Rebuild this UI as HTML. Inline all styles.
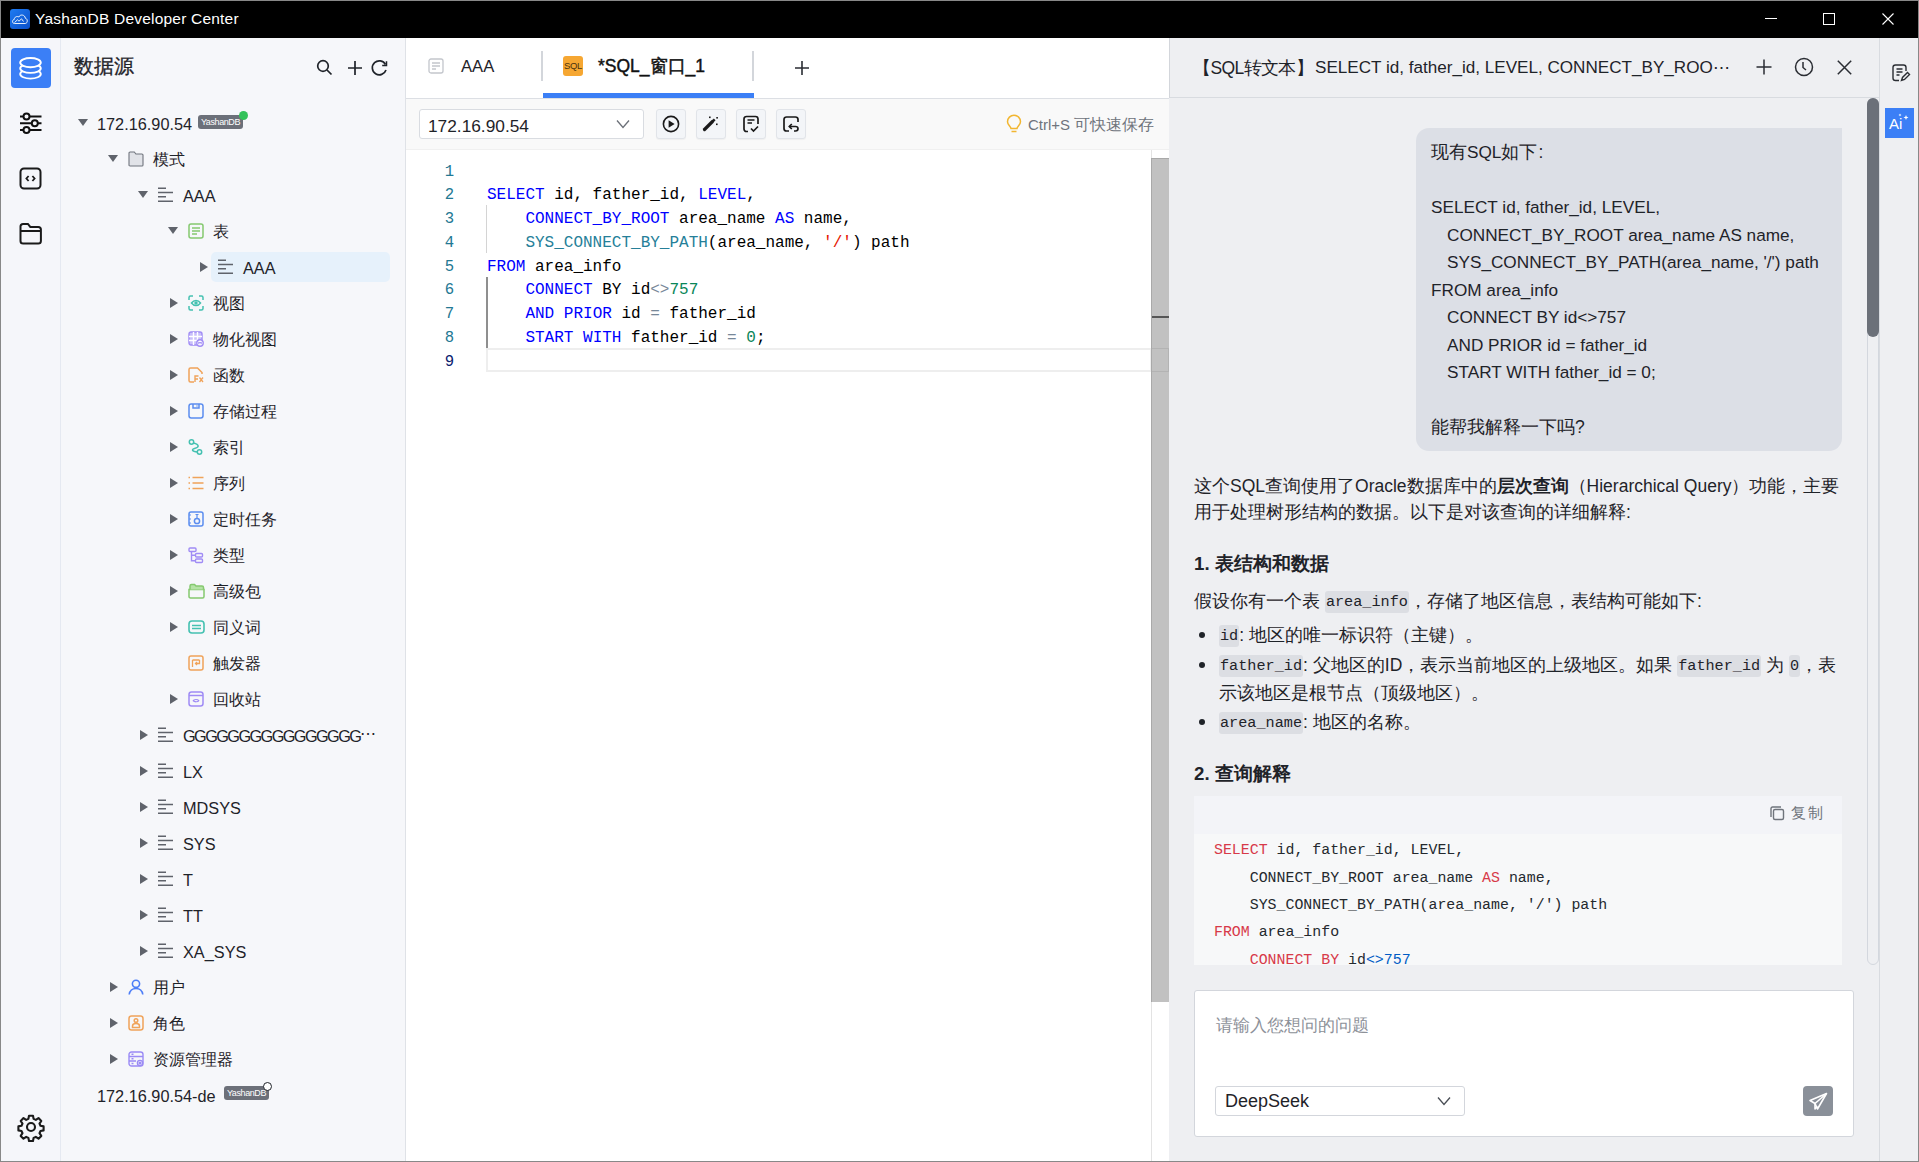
<!DOCTYPE html>
<html><head><meta charset="utf-8">
<style>
*{box-sizing:border-box;margin:0;padding:0}
html,body{width:1919px;height:1162px;overflow:hidden;background:#888}
body{font-family:"Liberation Sans",sans-serif;color:#1f2329;position:relative}
.a{position:absolute}
svg{position:absolute;overflow:visible}
#title{left:1px;top:1px;width:1917px;height:37px;background:#000}
#rail{left:1px;top:38px;width:59px;height:1123px;background:#f5f6fa}
#railb{left:60px;top:38px;width:1px;height:1123px;background:#e5e9f1}
#side{left:61px;top:38px;width:344px;height:1123px;background:#f6f7fa}
#sideb{left:405px;top:38px;width:1px;height:1123px;background:#dfe2e7}
#ed{left:406px;top:38px;width:763px;height:1123px;background:#fff}
#aib{left:1169px;top:38px;width:1px;height:60px;background:#d3d6db}
#ai{left:1169px;top:38px;width:710px;height:1123px;background:#eeeff2}
#rrb{left:1879px;top:38px;width:1px;height:1123px;background:#d8dbe0}
#rr{left:1880px;top:38px;width:38px;height:1123px;background:#eeeff2}
.row{position:absolute;height:36px;line-height:36px;font-size:16.4px;white-space:nowrap;color:#1f2329}
.lat{font-size:16.3px;margin-top:0.5px}
.tri-d{position:absolute;width:0;height:0;border-left:5.5px solid transparent;border-right:5.5px solid transparent;border-top:7.5px solid #5f636b}
.tri-r{position:absolute;width:0;height:0;border-top:5.5px solid transparent;border-bottom:5.5px solid transparent;border-left:8px solid #5f636b}
.code{font-family:"Liberation Mono",monospace}
.bt{height:26px;line-height:26px;font-size:17.5px;white-space:pre;color:#1f2329}
.L{}
.ht{height:28px;line-height:28px;font-size:18.7px;font-weight:bold;white-space:nowrap;color:#1f2329}
.ic{font-family:"Liberation Mono",monospace;font-size:15.2px;background:#dcdee3;border-radius:3px;padding:2px 1px;position:relative;top:-1.5px}
</style></head><body>
<div id="title" class="a"></div>
<div id="rail" class="a"></div>
<div id="railb" class="a"></div>
<div id="side" class="a"></div>
<div id="sideb" class="a"></div>
<div id="ed" class="a"></div>
<div id="ai" class="a"></div>
<div id="aib" class="a"></div>
<div id="rrb" class="a"></div>
<div id="rr" class="a"></div>
<div class="a" style="left:10px;top:9px;width:20px;height:20px;border-radius:3px;background:linear-gradient(135deg,#1e7cf2,#0a4fc9)"></div>
<svg style="left:10px;top:9px" width="20" height="20" viewBox="0 0 20 20"><path d="M4.5 14.5 C2 14.5 1.8 10.8 4.2 10.5 C4.3 8 7 6.8 8.8 8 C10 5 15 5.5 15.3 9.2 C17.8 9.5 18 14.3 15.3 14.5 Z" fill="none" stroke="#fff" stroke-width="0.9"/><path d="M4.5 13.5 L7.5 10.8 L9 12.2 L11.5 9.8 L13.5 12.5" fill="none" stroke="#fff" stroke-width="0.9"/></svg>
<div class="a" id="ttxt" style="left:35px;top:10px;height:18px;line-height:18px;font-size:15.5px;color:#fff;white-space:nowrap;letter-spacing:0.2px">YashanDB Developer Center</div>
<div class="a" style="left:1765px;top:18px;width:12px;height:1px;background:#fff"></div>
<div class="a" style="left:1823px;top:13px;width:12px;height:12px;border:1px solid #fff"></div>
<svg style="left:1882px;top:13px" width="12" height="12" viewBox="0 0 12 12"><path d="M0.5 0.5L11.5 11.5M11.5 0.5L0.5 11.5" stroke="#fff" stroke-width="1.1"/></svg>

<div class="a" style="left:11px;top:48px;width:40px;height:40px;border-radius:4px;background:#3b7ff6"></div>
<svg style="left:19px;top:56px" width="24" height="25" viewBox="0 0 24 25"><g fill="#3b7ff6" stroke="#fff" stroke-width="1.9"><ellipse cx="11.5" cy="18" rx="10.3" ry="4.6"/><ellipse cx="11.5" cy="12.3" rx="10.3" ry="4.6"/><ellipse cx="11.5" cy="6.6" rx="10.3" ry="4.6"/></g></svg>
<svg style="left:19px;top:112px" width="24" height="22" viewBox="0 0 24 22"><g fill="none" stroke="#111" stroke-width="2"><path d="M1 4.5h3.5M10.5 4.5h12M1 11.3h11.8M18.8 11.3h3.7M1 18h3.5M10.5 18h12"/><circle cx="7.5" cy="4.5" r="3"/><circle cx="15.8" cy="11.3" r="3"/><circle cx="7.5" cy="18" r="3"/></g></svg>
<svg style="left:19px;top:167px" width="23" height="23" viewBox="0 0 23 23"><g fill="none" stroke="#1a1a1a" stroke-width="2"><rect x="1.5" y="1.5" width="20" height="20" rx="3.5"/><path d="M9.6 9l-2.2 2.5 2.2 2.5M13.4 9l2.2 2.5-2.2 2.5" stroke-width="1.8"/></g></svg>
<svg style="left:19px;top:222px" width="23" height="23" viewBox="0 0 23 23"><g fill="none" stroke="#1a1a1a" stroke-width="2"><path d="M1.5 4.5c0-1.6 1-2.6 2.6-2.6h4.8l2.4 3h8c1.6 0 2.6 1 2.6 2.6v11.5c0 1.6-1 2.6-2.6 2.6H4.1c-1.6 0-2.6-1-2.6-2.6z"/><path d="M1.5 9h20"/></g></svg>
<svg style="left:18px;top:1114px" width="26" height="26" viewBox="0 0 26 26"><g fill="none" stroke="#1a1a1a" stroke-width="2.1" stroke-linejoin="round"><path d="M11 1.8h4l.6 3.1 2.2 1 2.7-1.8 2.8 2.8-1.8 2.7 1 2.2 3.1.6v4l-3.1.6-1 2.2 1.8 2.7-2.8 2.8-2.7-1.8-2.2 1-.6 3.1h-4l-.6-3.1-2.2-1-2.7 1.8-2.8-2.8 1.8-2.7-1-2.2-3.1-.6v-4l3.1-.6 1-2.2-1.8-2.7 2.8-2.8 2.7 1.8 2.2-1z"/><circle cx="13" cy="13" r="4"/></g></svg>

<div class="a" style="left:74px;top:53px;height:26px;line-height:26px;font-size:20px;color:#1f2329;-webkit-text-stroke:0.3px #1f2329">数据源</div>
<svg style="left:316px;top:59px" width="17" height="17" viewBox="0 0 17 17"><g fill="none" stroke="#1f2329" stroke-width="1.7"><circle cx="7" cy="7" r="5.3"/><path d="M11 11l4.5 4.5"/></g></svg>
<svg style="left:347px;top:60px" width="16" height="16" viewBox="0 0 16 16"><path d="M8 1v14M1 8h14" stroke="#1f2329" stroke-width="1.7"/></svg>
<svg style="left:371px;top:60px" width="17" height="16" viewBox="0 0 17 16"><g fill="none" stroke="#1f2329" stroke-width="1.7"><path d="M14.5 4.5A7 7 0 1 0 15 10"/><path d="M15.5 1.2v4.3h-4.3" stroke-width="1.5"/></g></svg>
<!--TREE--><div class="tri-d" style="left:78px;top:119px"></div>
<div class="row lat" style="left:97px;top:105px">172.16.90.54</div>
<div class="tri-d" style="left:108px;top:155px"></div>
<svg style="left:128px;top:151px" width="16" height="16" viewBox="0 0 16 16"><path d="M1 2.2c0-.7.4-1.2 1.1-1.2h4.2l1.6 2h6c.7 0 1.1.4 1.1 1.1v9.8c0 .7-.4 1.1-1.1 1.1H2.1c-.7 0-1.1-.4-1.1-1.1z" fill="#e1e3e8" stroke="#6f747c" stroke-width="1.1"/></svg>
<div class="row" style="left:153px;top:141px">模式</div>
<div class="tri-d" style="left:138px;top:191px"></div>
<svg style="left:158px;top:187px" width="16" height="16" viewBox="0 0 16 16"><g stroke="#5f636b" stroke-width="1.6"><path d="M0 1.2h8M0 5.5h15M0 9.8h8M0 14.2h15"/></g></svg>
<div class="row lat" style="left:183px;top:177px">AAA</div>
<div class="tri-d" style="left:168px;top:227px"></div>
<svg style="left:188px;top:223px" width="16" height="16" viewBox="0 0 16 16"><g fill="none" stroke="#85c96f" stroke-width="1.5"><rect x="1" y="1" width="14" height="14" rx="2"/><path d="M4 5h8M4 8h8M4 11h5"/></g></svg>
<div class="row" style="left:213px;top:213px">表</div>
<div class="a" style="left:211px;top:252px;width:179px;height:30px;border-radius:5px;background:#e6f1fb"></div>
<div class="tri-r" style="left:200px;top:262px"></div>
<svg style="left:218px;top:259px" width="16" height="16" viewBox="0 0 16 16"><g stroke="#5f636b" stroke-width="1.6"><path d="M0 1.2h8M0 5.5h15M0 9.8h8M0 14.2h15"/></g></svg>
<div class="row lat" style="left:243px;top:249px">AAA</div>
<div class="tri-r" style="left:170px;top:298px"></div>
<svg style="left:188px;top:295px" width="16" height="16" viewBox="0 0 16 16"><g fill="none" stroke="#45c1b1" stroke-width="1.5"><path d="M1 5V2.5C1 1.7 1.7 1 2.5 1H5M11 1h2.5c.8 0 1.5.7 1.5 1.5V5M15 11v2.5c0 .8-.7 1.5-1.5 1.5H11M5 15H2.5C1.7 15 1 14.3 1 13.5V11"/><path d="M3.5 8c2.5-3.3 6.5-3.3 9 0-2.5 3.3-6.5 3.3-9 0z"/><circle cx="8" cy="8" r="1" fill="#45c1b1"/></g></svg>
<div class="row" style="left:213px;top:285px">视图</div>
<div class="tri-r" style="left:170px;top:334px"></div>
<svg style="left:188px;top:331px" width="16" height="16" viewBox="0 0 16 16"><g fill="none" stroke="#a08cf5" stroke-width="1.4"><rect x="1" y="1" width="13" height="13" rx="2" fill="#c9bffb"/><path d="M1 5.5h13M1 9.5h13M5.5 1v13M9.5 1v13" stroke="#fff"/><circle cx="12" cy="12" r="3.2" fill="#fff"/><path d="M10.8 13.3v-2.4l1.2 1.3 1.2-1.3v2.4" stroke-width="1"/></g></svg>
<div class="row" style="left:213px;top:321px">物化视图</div>
<div class="tri-r" style="left:170px;top:370px"></div>
<svg style="left:188px;top:367px" width="16" height="16" viewBox="0 0 16 16"><g fill="none" stroke="#f0a35a" stroke-width="1.5"><path d="M6 15H2.5C1.7 15 1 14.3 1 13.5v-11C1 1.7 1.7 1 2.5 1h7l4.5 4.5V7"/><path d="M7 15V9h3.5M7 12h3" stroke-width="1.4"/><path d="M11.5 10.5l3.5 4.5M15 10.5l-3.5 4.5" stroke-width="1.3"/></g></svg>
<div class="row" style="left:213px;top:357px">函数</div>
<div class="tri-r" style="left:170px;top:406px"></div>
<svg style="left:188px;top:403px" width="16" height="16" viewBox="0 0 16 16"><g fill="none" stroke="#5b8def" stroke-width="1.5"><rect x="1" y="1" width="14" height="14" rx="2.2"/><path d="M5 1v4h6V1M9 2.5v1"/></g></svg>
<div class="row" style="left:213px;top:393px">存储过程</div>
<div class="tri-r" style="left:170px;top:442px"></div>
<svg style="left:188px;top:439px" width="16" height="16" viewBox="0 0 16 16"><g fill="none" stroke="#45c1b1" stroke-width="1.5"><circle cx="3.5" cy="3" r="2.2"/><circle cx="11.5" cy="13" r="2.2"/><path d="M5.5 4c6 1.5 6 4.5 1 5.5-3 .8-3 3 3 3.5"/></g></svg>
<div class="row" style="left:213px;top:429px">索引</div>
<div class="tri-r" style="left:170px;top:478px"></div>
<svg style="left:188px;top:475px" width="16" height="16" viewBox="0 0 16 16"><g stroke="#f0a35a" stroke-width="1.5"><path d="M4.5 2.5h11M4.5 8h11M4.5 13.5h11M0.5 2.5h1.5M0.5 8h1.5M0.5 13.5h1.5"/></g></svg>
<div class="row" style="left:213px;top:465px">序列</div>
<div class="tri-r" style="left:170px;top:514px"></div>
<svg style="left:188px;top:511px" width="16" height="16" viewBox="0 0 16 16"><g fill="none" stroke="#5b8def" stroke-width="1.5"><rect x="1" y="1" width="14" height="14" rx="2"/><path d="M1 4h2M1 8h2M1 12h2" stroke-width="1.2"/><circle cx="9" cy="10" r="2.6"/><path d="M7.5 3.5h3M9 4v3.2" stroke-width="1.2"/></g></svg>
<div class="row" style="left:213px;top:501px">定时任务</div>
<div class="tri-r" style="left:170px;top:550px"></div>
<svg style="left:188px;top:547px" width="16" height="16" viewBox="0 0 16 16"><g fill="none" stroke="#a08cf5" stroke-width="1.4"><rect x="1" y="1" width="7" height="3.5" rx="1"/><rect x="7.5" y="6.5" width="7" height="3.5" rx="1"/><rect x="7.5" y="12" width="7" height="3.5" rx="1"/><path d="M3.5 4.5v9.2h4M3.5 8.2h4"/></g></svg>
<div class="row" style="left:213px;top:537px">类型</div>
<div class="tri-r" style="left:170px;top:586px"></div>
<svg style="left:188px;top:583px" width="16" height="16" viewBox="0 0 16 16"><g fill="none" stroke="#85c96f" stroke-width="1.5"><path d="M1 6.5h15v7c0 .9-.6 1.5-1.5 1.5h-12C1.6 15 1 14.4 1 13.5z"/><path d="M2 6.5V3c0-.9.6-1.5 1.5-1.5h3l1.5 1.5h6c.9 0 1.5.6 1.5 1.5v2" fill="#b5e3a6"/></g></svg>
<div class="row" style="left:213px;top:573px">高级包</div>
<div class="tri-r" style="left:170px;top:622px"></div>
<svg style="left:188px;top:619px" width="16" height="16" viewBox="0 0 16 16"><g fill="none" stroke="#45c1b1" stroke-width="1.6"><rect x="1" y="2" width="15" height="12" rx="3"/><path d="M4 6.5h9M4 9.5h9"/></g></svg>
<div class="row" style="left:213px;top:609px">同义词</div>
<svg style="left:188px;top:655px" width="16" height="16" viewBox="0 0 16 16"><g fill="none" stroke="#f0a35a" stroke-width="1.5"><rect x="1" y="1" width="14" height="14" rx="2"/><path d="M4.5 5h7M4.5 5v7M11.5 5v3.5H7.5M9 7l-1.5 1.5L9 10" stroke-width="1.3"/></g></svg>
<div class="row" style="left:213px;top:645px">触发器</div>
<div class="tri-r" style="left:170px;top:694px"></div>
<svg style="left:188px;top:691px" width="16" height="16" viewBox="0 0 16 16"><g fill="none" stroke="#a08cf5" stroke-width="1.5"><rect x="1" y="1" width="14" height="14" rx="2.5"/><path d="M1 4.5h14"/><path d="M5 9.8c1-1.6 4.5-1.8 6 0M11 9.5c-1 1.6-4.5 1.8-6 0" stroke-width="1.2"/></g></svg>
<div class="row" style="left:213px;top:681px">回收站</div>
<div class="tri-r" style="left:140px;top:730px"></div>
<svg style="left:158px;top:727px" width="16" height="16" viewBox="0 0 16 16"><g stroke="#5f636b" stroke-width="1.6"><path d="M0 1.2h8M0 5.5h15M0 9.8h8M0 14.2h15"/></g></svg>
<div class="row lat" style="left:183px;top:717px;letter-spacing:-1.58px">GGGGGGGGGGGGGGGG</div>
<div class="row" style="left:360px;top:716px;font-size:16px">⋯</div>
<div class="tri-r" style="left:140px;top:766px"></div>
<svg style="left:158px;top:763px" width="16" height="16" viewBox="0 0 16 16"><g stroke="#5f636b" stroke-width="1.6"><path d="M0 1.2h8M0 5.5h15M0 9.8h8M0 14.2h15"/></g></svg>
<div class="row lat" style="left:183px;top:753px">LX</div>
<div class="tri-r" style="left:140px;top:802px"></div>
<svg style="left:158px;top:799px" width="16" height="16" viewBox="0 0 16 16"><g stroke="#5f636b" stroke-width="1.6"><path d="M0 1.2h8M0 5.5h15M0 9.8h8M0 14.2h15"/></g></svg>
<div class="row lat" style="left:183px;top:789px">MDSYS</div>
<div class="tri-r" style="left:140px;top:838px"></div>
<svg style="left:158px;top:835px" width="16" height="16" viewBox="0 0 16 16"><g stroke="#5f636b" stroke-width="1.6"><path d="M0 1.2h8M0 5.5h15M0 9.8h8M0 14.2h15"/></g></svg>
<div class="row lat" style="left:183px;top:825px">SYS</div>
<div class="tri-r" style="left:140px;top:874px"></div>
<svg style="left:158px;top:871px" width="16" height="16" viewBox="0 0 16 16"><g stroke="#5f636b" stroke-width="1.6"><path d="M0 1.2h8M0 5.5h15M0 9.8h8M0 14.2h15"/></g></svg>
<div class="row lat" style="left:183px;top:861px">T</div>
<div class="tri-r" style="left:140px;top:910px"></div>
<svg style="left:158px;top:907px" width="16" height="16" viewBox="0 0 16 16"><g stroke="#5f636b" stroke-width="1.6"><path d="M0 1.2h8M0 5.5h15M0 9.8h8M0 14.2h15"/></g></svg>
<div class="row lat" style="left:183px;top:897px">TT</div>
<div class="tri-r" style="left:140px;top:946px"></div>
<svg style="left:158px;top:943px" width="16" height="16" viewBox="0 0 16 16"><g stroke="#5f636b" stroke-width="1.6"><path d="M0 1.2h8M0 5.5h15M0 9.8h8M0 14.2h15"/></g></svg>
<div class="row lat" style="left:183px;top:933px">XA_SYS</div>
<div class="tri-r" style="left:110px;top:982px"></div>
<svg style="left:128px;top:979px" width="16" height="16" viewBox="0 0 16 16"><g fill="none" stroke="#4d7ef7" stroke-width="1.6"><circle cx="8" cy="4.8" r="3.6"/><path d="M1.2 15.5c.6-3.8 3.2-6 6.8-6s6.2 2.2 6.8 6"/></g></svg>
<div class="row" style="left:153px;top:969px">用户</div>
<div class="tri-r" style="left:110px;top:1018px"></div>
<svg style="left:128px;top:1015px" width="16" height="16" viewBox="0 0 16 16"><g fill="none" stroke="#f0a35a" stroke-width="1.5"><rect x="1" y="1" width="14" height="14" rx="2.5"/><circle cx="8" cy="5.5" r="1.8"/><path d="M4.5 12.5v-1.5c0-1.5 1.5-2.5 3.5-2.5s3.5 1 3.5 2.5v1.5zM4.5 12.5h7"/></g></svg>
<div class="row" style="left:153px;top:1005px">角色</div>
<div class="tri-r" style="left:110px;top:1054px"></div>
<svg style="left:128px;top:1051px" width="16" height="16" viewBox="0 0 16 16"><g fill="none" stroke="#9b8bf5" stroke-width="1.4"><rect x="1" y="1" width="14" height="14" rx="2.5"/><path d="M1 5.5h14M1 10h7M3.5 3.2h2M3.5 7.8h2M3.5 12.5h2"/><circle cx="12" cy="12" r="2.6" fill="#f6f7fa"/><circle cx="12" cy="12" r="0.8"/></g></svg>
<div class="row" style="left:153px;top:1041px">资源管理器</div>
<div class="row lat" style="left:97px;top:1077px">172.16.90.54-de</div>
<div class="a" style="left:198px;top:115px;width:45px;height:14px;border-radius:3px;background:#6c7079;color:#fff;font-size:9px;line-height:14px;text-align:center;letter-spacing:-0.4px">YashanDB</div>
<div class="a" style="left:239px;top:111px;width:9px;height:9px;border-radius:50%;background:#34c25a"></div>
<div class="a" style="left:224px;top:1086px;width:45px;height:14px;border-radius:3px;background:#6c7079;color:#fff;font-size:9px;line-height:14px;text-align:center;letter-spacing:-0.4px">YashanDB</div>
<div class="a" style="left:263px;top:1082px;width:9px;height:9px;border-radius:50%;background:#fff;border:1.5px solid #1f2329"></div><!--/TREE-->
<!--EDITOR--><div class="a" style="left:406px;top:98px;width:763px;height:1px;background:#dcdfe4"></div>
<svg style="left:428px;top:58px" width="16" height="16" viewBox="0 0 16 16"><g fill="none" stroke="#c3c6cc" stroke-width="1.3"><rect x="1" y="1" width="14" height="14" rx="2"/><path d="M4 5h8M4 8h8M4 11h4"/></g></svg>
<div class="a" style="left:461px;top:54.5px;height:24px;line-height:24px;font-size:16.6px;color:#1f2329">AAA</div>
<div class="a" style="left:541px;top:51px;width:2px;height:30px;background:#d3d6db"></div>
<div class="a" style="left:563px;top:56px;width:20px;height:20px;border-radius:3px;background:#f6a732;color:#4a3410;font-size:9.5px;line-height:20px;text-align:center;letter-spacing:-0.3px">SQL</div>
<div class="a" style="left:598px;top:54px;height:24px;line-height:24px;font-size:17.5px;color:#111;-webkit-text-stroke:0.45px #111">*SQL_窗口_1</div>
<div class="a" style="left:752px;top:51px;width:2px;height:30px;background:#d3d6db"></div>
<div class="a" style="left:543px;top:93px;width:211px;height:5px;background:#3b7ff6"></div>
<svg style="left:794px;top:60px" width="16" height="16" viewBox="0 0 16 16"><path d="M8 1v14M1 8h14" stroke="#2a2d33" stroke-width="1.6"/></svg>
<div class="a" style="left:406px;top:99px;width:763px;height:50px;background:#f9f9f9"></div>
<div class="a" style="left:406px;top:149px;width:763px;height:1px;background:#f0f0f0"></div>
<div class="a" style="left:419px;top:109px;width:225px;height:30px;background:#fff;border:1px solid #d9dce1;border-radius:3px"></div>
<div class="a lat" style="left:428px;top:113.5px;height:24px;line-height:24px;font-size:17.3px;color:#1f2329">172.16.90.54</div>
<svg style="left:616px;top:119px" width="14" height="10" viewBox="0 0 14 10"><path d="M1 1.5l6 7 6-7" fill="none" stroke="#6b7078" stroke-width="1.3"/></svg>
<div class="a" style="left:656px;top:109px;width:30px;height:30px;background:#f3f5f8;border:1px solid #e1e4e9;border-radius:3px;box-shadow:0 1px 1px rgba(0,0,0,0.04)"></div>
<div class="a" style="left:696px;top:109px;width:30px;height:30px;background:#f3f5f8;border:1px solid #e1e4e9;border-radius:3px;box-shadow:0 1px 1px rgba(0,0,0,0.04)"></div>
<div class="a" style="left:736px;top:109px;width:30px;height:30px;background:#f3f5f8;border:1px solid #e1e4e9;border-radius:3px;box-shadow:0 1px 1px rgba(0,0,0,0.04)"></div>
<div class="a" style="left:776px;top:109px;width:30px;height:30px;background:#f3f5f8;border:1px solid #e1e4e9;border-radius:3px;box-shadow:0 1px 1px rgba(0,0,0,0.04)"></div>
<svg style="left:656px;top:109px" width="30" height="30" viewBox="0 0 30 30"><circle cx="15" cy="15" r="7.6" fill="none" stroke="#1a1a1a" stroke-width="1.6"/><path d="M12.6 11.2v7.6l6-3.8z" fill="#1a1a1a"/></svg>
<svg style="left:696px;top:109px" width="30" height="30" viewBox="0 0 30 30"><path d="M8.5 20.5l8-8" stroke="#1a1a1a" stroke-width="3.2" stroke-linecap="round"/><path d="M17.2 11.8l1.5-1.5" stroke="#1a1a1a" stroke-width="2.4"/><g fill="#1a1a1a"><rect x="13" y="7.5" width="1.6" height="1.6"/><rect x="20.3" y="8" width="1.6" height="1.6"/><rect x="20" y="14.5" width="1.6" height="1.6"/></g></svg>
<svg style="left:736px;top:109px" width="30" height="30" viewBox="0 0 30 30"><g fill="none" stroke="#1a1a1a" stroke-width="1.7"><path d="M12 22.5h-1.5c-1.4 0-2.5-1.1-2.5-2.5V10c0-1.4 1.1-2.5 2.5-2.5h9c1.4 0 2.5 1.1 2.5 2.5v5"/><path d="M11.5 11h7M11.5 14h4.5"/><path d="M15 19.5l2.5 2.5 4.5-4.5"/></g></svg>
<svg style="left:776px;top:109px" width="30" height="30" viewBox="0 0 30 30"><g fill="none" stroke="#1a1a1a" stroke-width="1.7"><path d="M22 13v-2.5C22 9 21 8 19.5 8h-9C9 8 8 9 8 10.5v9c0 1.5 1 2.5 2.5 2.5H13"/><path d="M13.5 17.5h6c1.5 0 2.5 1 2.5 2.3 0 1.3-1 2.2-2.5 2.2h-1.5"/><path d="M15.8 15l-2.5 2.5 2.5 2.5"/></g></svg>
<svg style="left:1006px;top:116px" width="16" height="18" viewBox="0 0 16 18"><g fill="none" stroke="#f2b630" stroke-width="1.5"><path d="M5 12.5c0-2-3.5-3.5-3.5-6.8a6.5 6.5 0 0 1 13 0c0 3.3-3.5 4.8-3.5 6.8z"/><path d="M5.5 15.5h5"/></g></svg>
<div class="a" style="left:1028px;top:113px;height:24px;line-height:24px;font-size:15.6px;color:#6f747c;white-space:nowrap"><span style="font-size:15px">Ctrl+S</span> 可快速保存</div>
<div class="a" style="left:486px;top:348px;width:666px;height:24px;border:2px solid #eeeeee"></div>
<div class="a" style="left:486px;top:205px;width:1px;height:48px;background:#d4d4d4"></div>
<div class="a" style="left:486px;top:277px;width:1.5px;height:71px;background:#8f8f8f"></div>
<div class="a code" style="left:420px;top:160.50px;width:34px;height:23.75px;line-height:23.75px;font-size:15.6px;text-align:right;color:#237893">1</div>
<div class="a code" style="left:420px;top:184.25px;width:34px;height:23.75px;line-height:23.75px;font-size:15.6px;text-align:right;color:#237893">2</div>
<div class="a code" style="left:487px;top:184.25px;height:23.75px;line-height:23.75px;font-size:16px;white-space:pre;color:#000"><span style="color:#0000ff">SELECT</span> id, father_id, <span style="color:#0000ff">LEVEL</span>,</div>
<div class="a code" style="left:420px;top:208.00px;width:34px;height:23.75px;line-height:23.75px;font-size:15.6px;text-align:right;color:#237893">3</div>
<div class="a code" style="left:487px;top:208.00px;height:23.75px;line-height:23.75px;font-size:16px;white-space:pre;color:#000">    <span style="color:#0000ff">CONNECT_BY_ROOT</span> area_name <span style="color:#0000ff">AS</span> name,</div>
<div class="a code" style="left:420px;top:231.75px;width:34px;height:23.75px;line-height:23.75px;font-size:15.6px;text-align:right;color:#237893">4</div>
<div class="a code" style="left:487px;top:231.75px;height:23.75px;line-height:23.75px;font-size:16px;white-space:pre;color:#000">    <span style="color:#267f99">SYS_CONNECT_BY_PATH</span>(area_name, <span style="color:#e51400">'/'</span>) path</div>
<div class="a code" style="left:420px;top:255.50px;width:34px;height:23.75px;line-height:23.75px;font-size:15.6px;text-align:right;color:#237893">5</div>
<div class="a code" style="left:487px;top:255.50px;height:23.75px;line-height:23.75px;font-size:16px;white-space:pre;color:#000"><span style="color:#0000ff">FROM</span> area_info</div>
<div class="a code" style="left:420px;top:279.25px;width:34px;height:23.75px;line-height:23.75px;font-size:15.6px;text-align:right;color:#237893">6</div>
<div class="a code" style="left:487px;top:279.25px;height:23.75px;line-height:23.75px;font-size:16px;white-space:pre;color:#000">    <span style="color:#0000ff">CONNECT</span> BY id<span style="color:#778899">&lt;&gt;</span><span style="color:#098658">757</span></div>
<div class="a code" style="left:420px;top:303.00px;width:34px;height:23.75px;line-height:23.75px;font-size:15.6px;text-align:right;color:#237893">7</div>
<div class="a code" style="left:487px;top:303.00px;height:23.75px;line-height:23.75px;font-size:16px;white-space:pre;color:#000">    <span style="color:#0000ff">AND</span> <span style="color:#0000ff">PRIOR</span> id <span style="color:#778899">=</span> father_id</div>
<div class="a code" style="left:420px;top:326.75px;width:34px;height:23.75px;line-height:23.75px;font-size:15.6px;text-align:right;color:#237893">8</div>
<div class="a code" style="left:487px;top:326.75px;height:23.75px;line-height:23.75px;font-size:16px;white-space:pre;color:#000">    <span style="color:#0000ff">START</span> <span style="color:#0000ff">WITH</span> father_id <span style="color:#778899">=</span> <span style="color:#098658">0</span>;</div>
<div class="a code" style="left:420px;top:350.50px;width:34px;height:23.75px;line-height:23.75px;font-size:15.6px;text-align:right;color:#0b216f">9</div>
<div class="a" style="left:1151px;top:150px;width:1px;height:1011px;background:#e3e3e3"></div>
<div class="a" style="left:1151px;top:158px;width:18px;height:844px;background:#c1c1c1;border-left:1px solid #a9a9a9;border-top:1px solid #a9a9a9"></div>
<div class="a" style="left:1152px;top:316px;width:17px;height:2px;background:#555"></div>
<div class="a" style="left:1152px;top:348px;width:17px;height:24px;border:1px solid #b3b3b3;border-left:none"></div><!--/EDITOR-->
<!--AI--><div class="a" style="left:1170px;top:97px;width:709px;height:1px;background:#d8dbe0"></div>
<div class="a" style="left:1193px;top:56px;height:24px;line-height:24px;font-size:17.5px;color:#1f2329;white-space:nowrap;letter-spacing:-0.6px">【SQL转文本】</div>
<div class="a" id="ttl2" style="left:1315px;top:56px;height:24px;line-height:24px;font-size:17.1px;color:#1f2329;white-space:nowrap">SELECT id, father_id, LEVEL, CONNECT_BY_ROO⋯</div>
<svg style="left:1756px;top:59px" width="16" height="16" viewBox="0 0 16 16"><path d="M8 0.5v15M0.5 8h15" stroke="#2a2d33" stroke-width="1.5"/></svg>
<svg style="left:1794px;top:57px" width="20" height="20" viewBox="0 0 20 20"><g fill="none" stroke="#2a2d33" stroke-width="1.5"><circle cx="10" cy="10" r="8.5"/><path d="M9 5v5.5l3 2.5"/></g></svg>
<svg style="left:1837px;top:60px" width="15" height="15" viewBox="0 0 15 15"><path d="M0.8 0.8l13.4 13.4M14.2 0.8L0.8 14.2" stroke="#2a2d33" stroke-width="1.5"/></svg>
<div class="a" style="left:1867px;top:98px;width:12px;height:867px;border:1px solid #d3d7de;border-radius:6px"></div>
<div class="a" style="left:1867px;top:98px;width:12px;height:239px;background:#6b7079;border-radius:6px"></div>
<div class="a" style="left:1416px;top:128px;width:426px;height:323px;background:#dcdfe6;border-radius:13px 0 13px 13px"></div>
<div class="a bt" style="left:1431px;top:139px">现有<span style=font-size:17.2px>SQL</span>如下<span style="margin-left:1px">:</span></div>
<div class="a bt" style="left:1431px;top:194px"><span style=font-size:17.2px>SELECT id, father_id, LEVEL,</span></div>
<div class="a bt" style="left:1447px;top:222px"><span style=font-size:17.2px>CONNECT_BY_ROOT area_name AS name,</span></div>
<div class="a bt" style="left:1447px;top:249px"><span style=font-size:17.2px>SYS_CONNECT_BY_PATH(area_name, '/') path</span></div>
<div class="a bt" style="left:1431px;top:277px"><span style=font-size:17.2px>FROM area_info</span></div>
<div class="a bt" style="left:1447px;top:304px"><span style=font-size:17.2px>CONNECT BY id&lt;&gt;757</span></div>
<div class="a bt" style="left:1447px;top:332px"><span style=font-size:17.2px>AND PRIOR id = father_id</span></div>
<div class="a bt" style="left:1447px;top:359px"><span style=font-size:17.2px>START WITH father_id = 0;</span></div>
<div class="a bt" style="left:1431px;top:414px">能帮我解释一下吗?</div>
<div class="a bt" style="left:1194px;top:473px">这个<span class="L">SQL</span>查询使用了<span class="L">Oracle</span>数据库中的<b>层次查询</b>（<span class="L">Hierarchical Query</span>）功能，主要</div>
<div class="a bt" style="left:1194px;top:499px">用于处理树形结构的数据。以下是对该查询的详细解释:</div>
<div class="a bt" style="left:1194px;top:588px">假设你有一个表 <span class="ic">area_info</span>，存储了地区信息，表结构可能如下:</div>
<div class="a bt" style="left:1219px;top:622px"><span class="ic">id</span><span class="L">:</span> 地区的唯一标识符（主键）。</div>
<div class="a bt" style="left:1219px;top:652px"><span class="ic">father_id</span><span class="L">:</span> 父地区的<span class="L">ID</span>，表示当前地区的上级地区。如果 <span class="ic">father_id</span> 为 <span class="ic">0</span>，表</div>
<div class="a bt" style="left:1219px;top:680px">示该地区是根节点（顶级地区）。</div>
<div class="a bt" style="left:1219px;top:709px"><span class="ic">area_name</span><span class="L">:</span> 地区的名称。</div>
<div class="a" style="left:1199px;top:632px;width:6px;height:6px;border-radius:50%;background:#1f2329"></div>
<div class="a" style="left:1199px;top:662px;width:6px;height:6px;border-radius:50%;background:#1f2329"></div>
<div class="a" style="left:1199px;top:719px;width:6px;height:6px;border-radius:50%;background:#1f2329"></div>
<div class="a ht" style="left:1194px;top:550px">1. 表结构和数据</div>
<div class="a ht" style="left:1194px;top:760px">2. 查询解释</div>
<div class="a" style="left:1194px;top:796px;width:648px;height:169px;background:#f7f8f9;overflow:hidden"><div class="a" style="left:0;top:0;width:648px;height:38px;background:#f3f4f8"></div><svg style="left:576px;top:10px" width="15" height="15" viewBox="0 0 15 15"><g fill="none" stroke="#6f747c" stroke-width="1.4"><rect x="3.5" y="3.5" width="10" height="10" rx="1.5"/><path d="M1 11V2.5C1 1.7 1.7 1 2.5 1H11"/></g></svg><div class="a" style="left:597px;top:7px;height:20px;line-height:20px;font-size:15px;color:#6f747c;letter-spacing:2px">复制</div></div>
<div class="a" style="left:1194px;top:834px;width:648px;height:131px;overflow:hidden">
<div class="a code" style="left:20px;top:3px;height:26px;line-height:26px;font-size:14.9px;white-space:pre;color:#24292e"><span style="color:#d73a49">SELECT</span> id, father_id, LEVEL,</div>
<div class="a code" style="left:20px;top:31px;height:26px;line-height:26px;font-size:14.9px;white-space:pre;color:#24292e">    CONNECT_BY_ROOT area_name <span style="color:#d73a49">AS</span> name,</div>
<div class="a code" style="left:20px;top:58px;height:26px;line-height:26px;font-size:14.9px;white-space:pre;color:#24292e">    SYS_CONNECT_BY_PATH(area_name, '/') path</div>
<div class="a code" style="left:20px;top:85px;height:26px;line-height:26px;font-size:14.9px;white-space:pre;color:#24292e"><span style="color:#d73a49">FROM</span> area_info</div>
<div class="a code" style="left:20px;top:113px;height:26px;line-height:26px;font-size:14.9px;white-space:pre;color:#24292e">    <span style="color:#d73a49">CONNECT</span> <span style="color:#d73a49">BY</span> id<span style="color:#005cc5">&lt;&gt;757</span></div>
</div>
<div class="a" style="left:1194px;top:990px;width:660px;height:147px;background:#fff;border:1px solid #d3d6dc;border-radius:3px"></div>
<div class="a" style="left:1216px;top:1013px;height:24px;line-height:24px;font-size:17.4px;color:#8d9199">请输入您想问的问题</div>
<div class="a" style="left:1215px;top:1086px;width:250px;height:30px;background:#fff;border:1px solid #d3d6dc;border-radius:3px"></div>
<div class="a L" style="left:1225px;top:1089px;height:24px;line-height:24px;font-size:18px;color:#1f2329">DeepSeek</div>
<svg style="left:1437px;top:1096px" width="14" height="10" viewBox="0 0 14 10"><path d="M1 1.5l6 7 6-7" fill="none" stroke="#4a4e55" stroke-width="1.3"/></svg>
<div class="a" style="left:1803px;top:1086px;width:30px;height:30px;background:#8a9099;border-radius:4px"></div>
<svg style="left:1803px;top:1086px" width="30" height="30" viewBox="0 0 30 30"><g fill="none" stroke="#fff" stroke-width="1.6" stroke-linejoin="round"><path d="M23.5 7.5L7 14.5l5 3 2.5 5.5z"/><path d="M12 17.5l11.5-10"/><path d="M12 17.5v5.5l2.5-2.5"/></g></svg>
<svg style="left:1891px;top:63px" width="20" height="20" viewBox="0 0 20 20"><g fill="none" stroke="#2a2d33" stroke-width="1.4"><path d="M8 17.5H4.5C3.1 17.5 2 16.4 2 15V4.5C2 3.1 3.1 2 4.5 2h8C13.9 2 15 3.1 15 4.5V8"/><path d="M5.5 6h6M5.5 9h6M5.5 12h3"/><path d="M10.5 17.5l1-3 5-5 2 2-5 5z"/></g></svg>
<div class="a" style="left:1885px;top:108px;width:29px;height:30px;background:#3b7ff6"></div>
<div class="a L" style="left:1889px;top:114px;height:20px;line-height:20px;font-size:15px;color:#fff">Ai</div>
<svg style="left:1885px;top:108px" width="29" height="30" viewBox="0 0 29 30"><g fill="#fff"><path d="M21 7l.7 1.8 1.8.7-1.8.7-.7 1.8-.7-1.8-1.8-.7 1.8-.7z"/><path d="M15 5.5l.45 1.05 1.05.45-1.05.45L15 8.5l-.45-1.05L13.5 7l1.05-.45z"/></g></svg><!--/AI-->
<!--RR-->
</body></html>
